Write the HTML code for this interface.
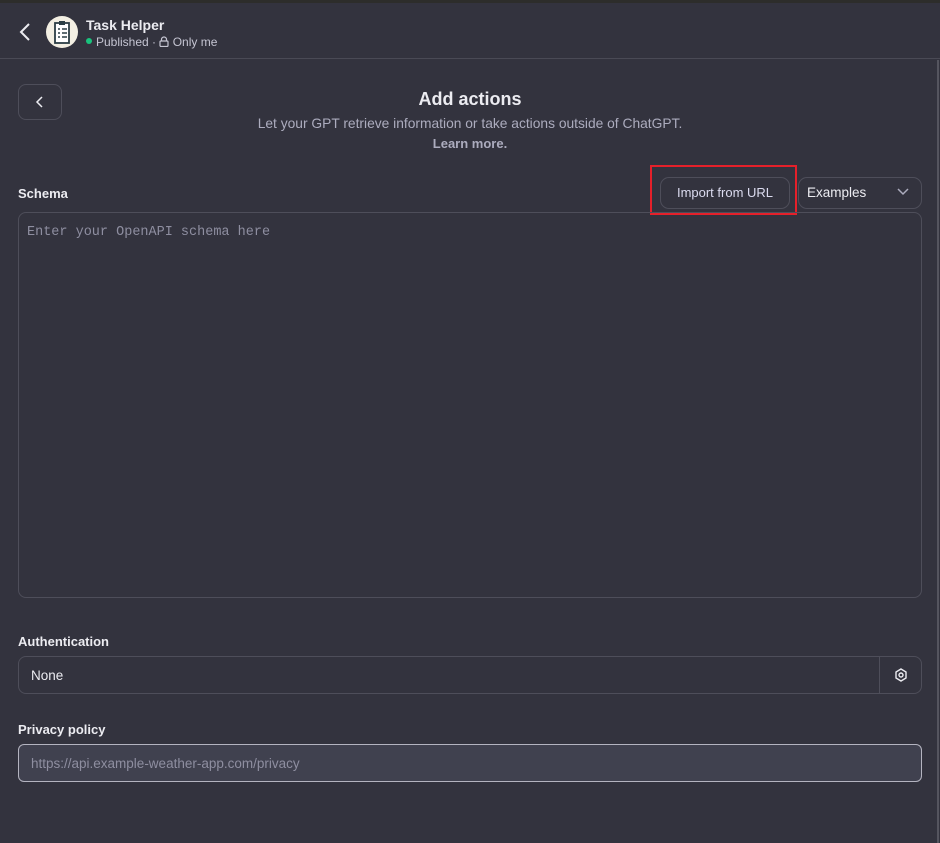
<!DOCTYPE html>
<html><head><style>
*{box-sizing:border-box;margin:0;padding:0}
body{width:940px;height:843px;background:#33333e;font-family:"Liberation Sans",sans-serif;color:#ececf1;position:relative;overflow:hidden}
.top{position:absolute;left:0;top:0;width:940px;height:3px;background:#2d2d2b}
.hdr{position:absolute;left:0;top:3px;width:940px;height:56px;border-bottom:1px solid #4a4a55}
.abs{position:absolute}
.btn{position:absolute;border:1px solid #4e4e5a;border-radius:8px}
.lbl{position:absolute;left:18px;font-size:13px;font-weight:bold;color:#ececf1}
</style></head><body>
<div class="top"></div>
<div class="hdr"></div>
<div class="abs" style="left:937px;top:60px;width:2px;height:783px;background:#55555f"></div>
<svg class="abs" style="left:18px;top:22px" width="14" height="20" viewBox="0 0 14 20"><path d="M11 2 L3 10 L11 18" fill="none" stroke="#ececf1" stroke-width="2"/></svg>
<div class="abs" style="left:46px;top:16px;width:32px;height:32px;border-radius:50%;background:#f3efe3"></div>
<svg class="abs" style="left:53px;top:19px" width="18" height="26" viewBox="0 0 18 26"><rect x="2" y="4" width="14" height="20" fill="#fff" stroke="#2c3e45" stroke-width="1.8"/><rect x="6" y="2" width="6" height="4" fill="#2c3e45"/><path d="M5 10h2M9 10h5M5 14h2M9 14h5M5 18h2M9 18h5" stroke="#2c3e45" stroke-width="1.5"/></svg>
<div class="abs" style="left:86px;top:17px;font-size:14px;font-weight:bold">Task Helper</div>
<div class="abs" style="left:86px;top:38px;width:6px;height:6px;border-radius:50%;background:#19c37d"></div>
<div class="abs" style="left:96px;top:35px;font-size:12px;color:#c5c5d2">Published · <svg width="10" height="11" viewBox="0 0 10 11" style="vertical-align:-1px"><path d="M2.5 5V3.5a2.5 2.5 0 0 1 5 0V5" fill="none" stroke="#c5c5d2" stroke-width="1.2"/><rect x="1" y="5" width="8" height="5.5" rx="1" fill="none" stroke="#c5c5d2" stroke-width="1.2"/></svg> Only me</div>
<div class="btn" style="left:18px;top:84px;width:44px;height:36px"></div>
<svg class="abs" style="left:35px;top:95px" width="10" height="14" viewBox="0 0 10 14"><path d="M7 2 L2 7 L7 12" fill="none" stroke="#ececf1" stroke-width="1.5"/></svg>
<div class="abs" style="left:0;width:940px;top:89px;text-align:center;font-size:18px;font-weight:bold">Add actions</div>
<div class="abs" style="left:0;width:940px;top:116px;text-align:center;font-size:13.8px;color:#acacbe">Let your GPT retrieve information or take actions outside of ChatGPT.</div>
<div class="abs" style="left:0;width:940px;top:136px;text-align:center;font-size:13px;font-weight:bold;color:#acacbe">Learn more.</div>
<div class="lbl" style="top:186px">Schema</div>
<div class="btn" style="left:660px;top:177px;width:130px;height:32px;border-radius:9px;font-size:13px;text-align:center;line-height:30px;color:#dcdcf0">Import from URL</div>
<div class="abs" style="left:650px;top:165px;width:147px;height:50px;border:2px solid #e5202a"></div>
<div class="btn" style="left:798px;top:177px;width:124px;height:32px;border-radius:9px;font-size:13.5px;line-height:30px;padding-left:8px">Examples</div>
<svg class="abs" style="left:897px;top:188px" width="12" height="8" viewBox="0 0 12 8"><path d="M1 1 L6 6 L11 1" fill="none" stroke="#acacbe" stroke-width="1.5"/></svg>
<div class="btn" style="left:18px;top:212px;width:904px;height:386px"></div>
<div class="abs" style="left:27px;top:225px;font-family:'Liberation Mono',monospace;font-size:13.5px;color:#8e8ea0">Enter your OpenAPI schema here</div>
<div class="lbl" style="top:634px">Authentication</div>
<div class="btn" style="left:18px;top:656px;width:904px;height:38px"></div>
<div class="abs" style="left:879px;top:657px;width:1px;height:36px;background:#4e4e5a"></div>
<div class="abs" style="left:31px;top:668px;font-size:13.5px">None</div>
<svg class="abs" style="left:893px;top:667px" width="16" height="16" viewBox="0 0 16 16"><path d="M8 2 L13 5 L13 11 L8 14 L3 11 L3 5 Z" fill="none" stroke="#ececf1" stroke-width="1.4"/><circle cx="8" cy="8" r="2" fill="none" stroke="#ececf1" stroke-width="1.4"/></svg>
<div class="lbl" style="top:722px">Privacy policy</div>
<div class="abs" style="left:18px;top:744px;width:904px;height:38px;border:1px solid #b4b4c0;border-radius:6px;background:#40414f"></div>
<div class="abs" style="left:31px;top:756px;font-size:13.5px;color:#8e8ea0">https://api.example-weather-app.com/privacy</div>
</body></html>
